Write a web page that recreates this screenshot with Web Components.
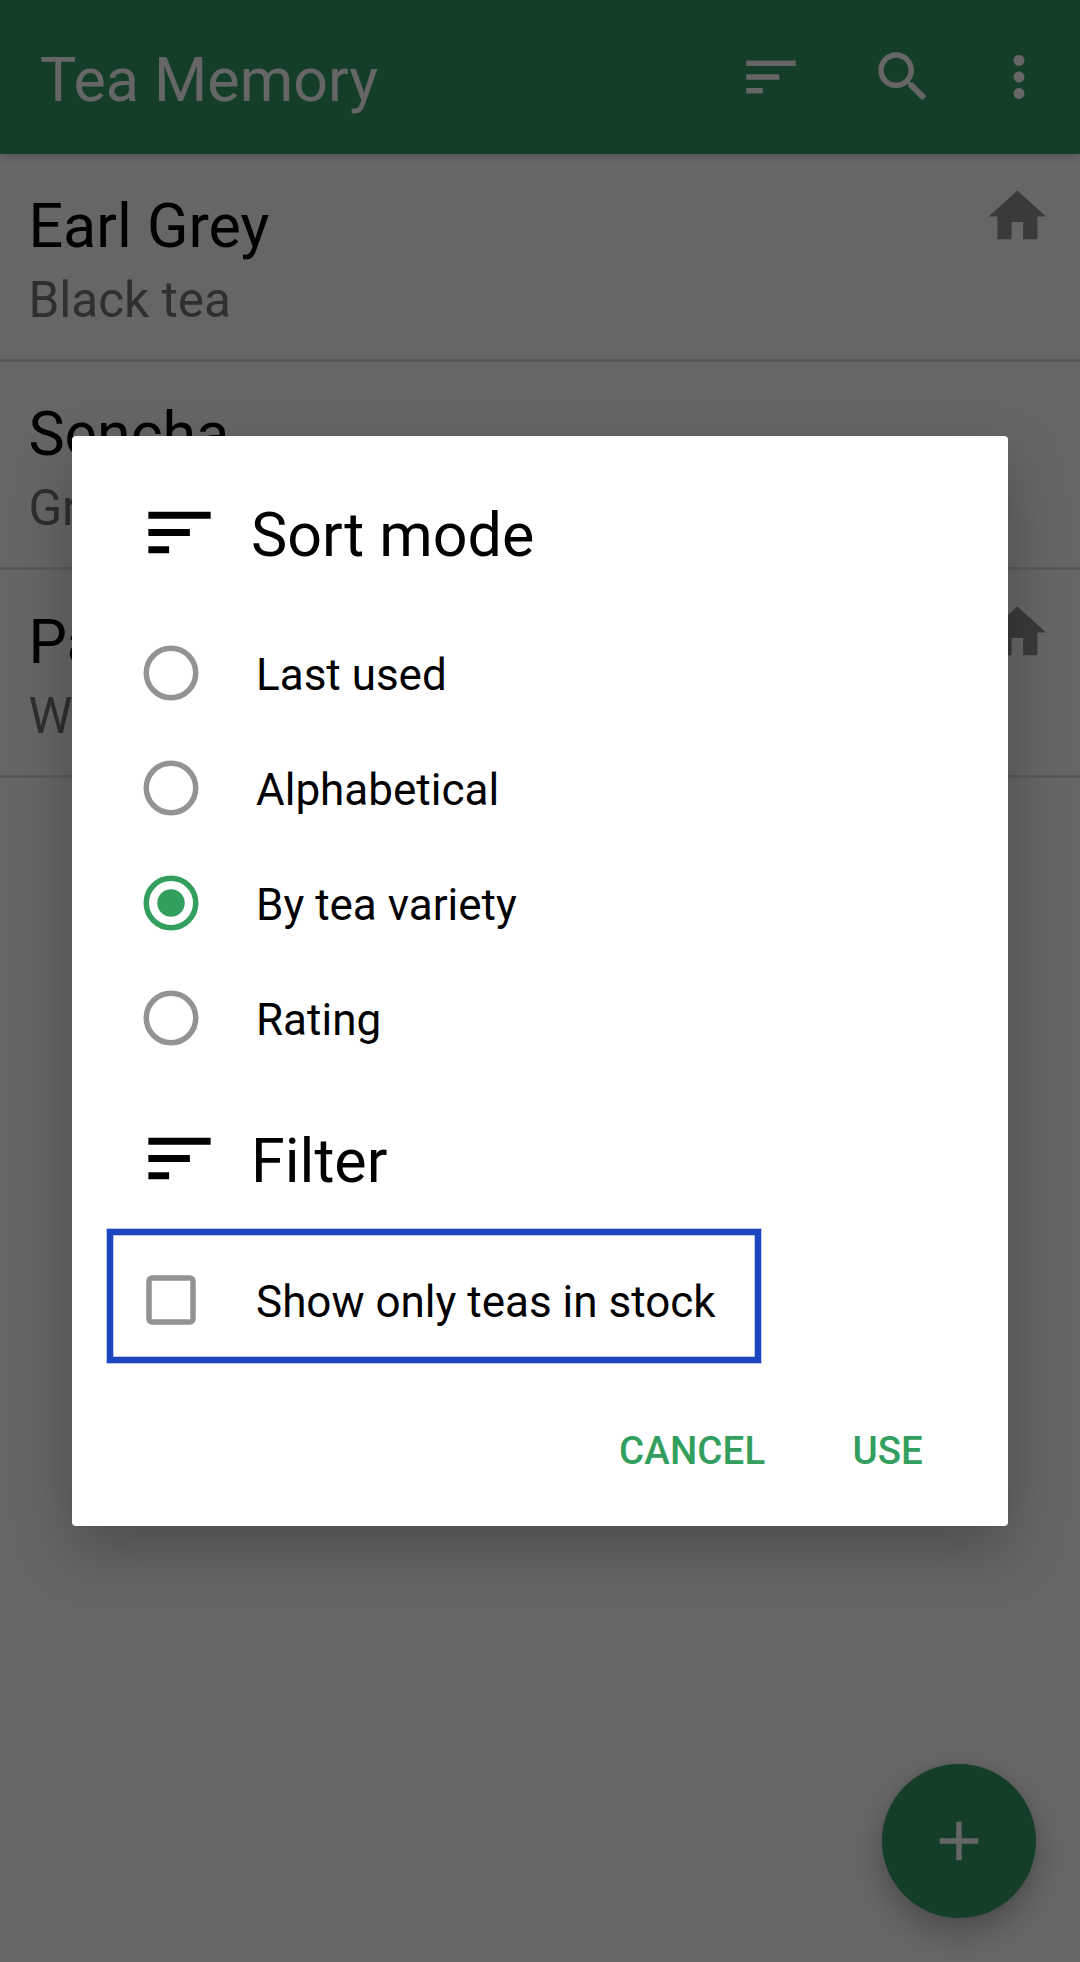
<!DOCTYPE html>
<html lang="en">
<head>
<meta charset="utf-8">
<title>Tea Memory</title>
<style>
  html, body { margin: 0; }
  body { width: 1080px; height: 1962px; overflow: hidden; background: #fff; font-family: Roboto, "Liberation Sans", sans-serif; color: #000; }
</style>
</head>
<body>
<tea-app>
  <app-bar slot="bar">Tea Memory
    <md-icon slot="actions" name="sort"></md-icon>
    <md-icon slot="actions" name="search"></md-icon>
    <md-icon slot="actions" name="more"></md-icon>
  </app-bar>
  <tea-item in-stock>Earl Grey<span slot="variety">Black tea</span></tea-item>
  <tea-item>Sencha<span slot="variety">Green tea</span></tea-item>
  <tea-item in-stock>Pai Mu Tan<span slot="variety">White tea</span></tea-item>
  <add-button slot="fab"></add-button>
  <sort-dialog slot="dialog">
    <dialog-heading>Sort mode</dialog-heading>
    <choice-row>Last used</choice-row>
    <choice-row>Alphabetical</choice-row>
    <choice-row checked>By tea variety</choice-row>
    <choice-row>Rating</choice-row>
    <dialog-heading class="second">Filter</dialog-heading>
    <choice-row kind="checkbox" highlighted>Show only teas in stock</choice-row>
    <text-button slot="buttons">CANCEL</text-button>
    <text-button slot="buttons">USE</text-button>
  </sort-dialog>
</tea-app>
<script>
const define = (name, render) => customElements.define(name, class extends HTMLElement {
  constructor() { super(); this.attachShadow({ mode: 'open' }); }
  connectedCallback() { this.shadowRoot.innerHTML = render(this); }
});

const PATHS = {
  sort: 'M3 18h6v-2H3v2zM3 6v2h18V6H3zm0 7h12v-2H3v2z',
  search: 'M15.5 14h-.79l-.28-.27C15.41 12.59 16 11.11 16 9.5 16 5.91 13.09 3 9.5 3S3 5.91 3 9.5 5.91 16 9.5 16c1.61 0 3.09-.59 4.23-1.57l.27.28v.79l5 4.99L20.49 19l-4.99-5zm-6 0C7.01 14 5 11.99 5 9.5S7.01 5 9.5 5 14 7.01 14 9.5 11.99 14 9.5 14z',
  more: 'M12 8c1.1 0 2-.9 2-2s-.9-2-2-2-2 .9-2 2 .9 2 2 2zm0 2c-1.1 0-2 .9-2 2s.9 2 2 2 2-.9 2-2-.9-2-2-2zm0 6c-1.1 0-2 .9-2 2s.9 2 2 2 2-.9 2-2-.9-2-2-2z',
  home: 'M10 20v-6h4v6h5v-8h3L12 3 2 12h3v8z',
  add: 'M19 13h-6v6h-2v-6H5v-2h6V5h2v6h6v2z'
};

define('md-icon', el => `
  <style>
    :host { display: block; flex: none; width: var(--size, 66px); height: var(--size, 66px); }
    svg { display: block; width: 100%; height: 100%; fill: currentColor; }
  </style>
  <svg viewBox="0 0 24 24"><path d="${PATHS[el.getAttribute('name')]}"/></svg>`);

define('tea-app', () => `
  <style>
    :host { display: flex; flex-direction: column; position: relative; width: 1080px; height: 1962px; overflow: hidden; }
    .scrim { position: absolute; inset: 0; background: rgba(0,0,0,.6); }
    .fab { position: absolute; right: 44px; bottom: 44px; }
    .modal { position: absolute; inset: 0; display: flex; align-items: center; justify-content: center; }
  </style>
  <slot name="bar"></slot>
  <slot></slot>
  <div class="fab"><slot name="fab"></slot></div>
  <div class="scrim"></div>
  <div class="modal"><slot name="dialog"></slot></div>`);

define('app-bar', () => `
  <style>
    :host { display: flex; box-sizing: border-box; height: 154px; padding: 0 28px 0 40px; background: #349c61; color: #fff; position: relative; z-index: 0;
      box-shadow: 0 3px 8px rgba(0,0,0,.15); font-size: 61px; line-height: 71px; }
    .title { flex: 1; padding-top: 45px; white-space: nowrap; }
    .actions { display: flex; padding-top: 44px; gap: 66px; }
    ::slotted([name="more"]) { margin-left: -16px; }
  </style>
  <div class="title"><slot></slot></div>
  <div class="actions"><slot name="actions"></slot></div>`);

define('tea-item', el => `
  <style>
    :host { display: flex; box-sizing: border-box; height: 208px; padding: 0 28.4px; border-bottom: 3px solid #e0e0e0; white-space: nowrap; }
    .text { flex: 1; padding-top: 37px; font-size: 61px; line-height: 71px; }
    .variety { margin-top: 9px; font-size: 49.5px; line-height: 58px; color: #757575; }
    md-icon { --size: 68.75px; margin-top: 28.4px; color: #919191; }
  </style>
  <div class="text"><slot></slot><div class="variety"><slot name="variety"></slot></div></div>
  ${el.hasAttribute('in-stock') ? '<md-icon name="home"></md-icon>' : ''}`);

define('add-button', () => `
  <style>
    :host { display: flex; align-items: center; justify-content: center; width: 154px; height: 154px; border-radius: 50%; background: #349c61; color: #fff;
      box-shadow: 0 14px 32px rgba(0,0,0,.26), 0 0 8px rgba(0,0,0,.08); }
  </style>
  <md-icon name="add"></md-icon>`);

define('sort-dialog', () => `
  <style>
    :host { display: flex; flex-direction: column; box-sizing: border-box; width: 936px; height: 1090px; padding: 55px 66px 0; background: #fff; border-radius: 4px;
      box-shadow: 0 24px 62px rgba(0,0,0,.26); }
    ::slotted(.second) { margin: 41.5px 0 1.5px; }
    .buttons { display: flex; justify-content: flex-end; gap: 87px; padding-right: 19px; margin-top: 71px; }
  </style>
  <slot></slot>
  <div class="buttons"><slot name="buttons"></slot></div>`);

define('dialog-heading', () => `
  <style>
    :host { display: flex; height: 124px; font-size: 61px; line-height: 71px; }
    md-icon { --size: 83px; }
    span { margin: 9px 0 0 30px; }
  </style>
  <md-icon name="sort"></md-icon><span><slot></slot></span>`);

define('choice-row', el => {
  const box = el.getAttribute('kind') === 'checkbox';
  const on = el.hasAttribute('checked');
  const mark = box
    ? '<rect x="6" y="6" width="44" height="44" rx="3"/>'
    : '<circle cx="28" cy="28" r="24.75"/>' + (on ? '<circle class="dot" cx="28" cy="28" r="13.75"/>' : '');
  return `
  <style>
    :host { display: flex; align-items: center; position: relative; height: 115px; font-size: 44px; line-height: 52px; white-space: nowrap; }
    svg { width: 55px; height: 55px; margin: 0 58px 0 5px; overflow: visible; fill: none; stroke: ${on ? '#339f5f' : '#939393'}; stroke-width: 5.5; }
    .dot { fill: #339f5f; stroke: none; }
    .label { padding-top: 4px; }
    .ring { position: absolute; left: -31px; top: -13px; box-sizing: border-box; width: 654px; height: 134px; border: 6px solid #1c46c0;
      box-shadow: 0 0 0 1px rgba(28,70,192,.3), inset 0 0 0 1px rgba(28,70,192,.3); }
  </style>
  <svg viewBox="0 0 55 55">${mark}</svg><span class="label"><slot></slot></span>
  ${el.hasAttribute('highlighted') ? '<div class="ring"></div>' : ''}`;
});

define('text-button', () => `
  <style>:host { display: block; color: #339f5f; font-size: 38.5px; line-height: 46px; font-weight: 500; letter-spacing: .12px; }</style>
  <slot></slot>`);
</script>
</body>
</html>
